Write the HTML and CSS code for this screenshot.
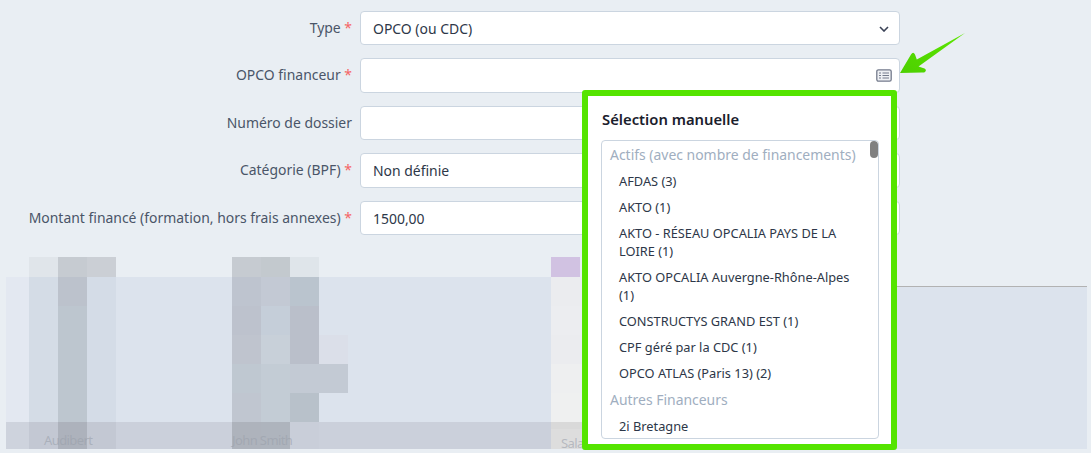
FILE: index.html
```html
<!DOCTYPE html>
<html lang="fr">
<head>
<meta charset="utf-8">
<title>Financement</title>
<link rel="stylesheet" href="styles.css">
</head>
<body>
<main class="page">
  <form class="form">
    <div class="row">
      <label class="label">Type <span class="req">*</span></label>
      <div class="field">OPCO (ou CDC)
        <svg class="chevron" width="10" height="6" viewBox="0 0 10 6"><path d="M1 1l4 4 4-4" fill="none" stroke="#3a4256" stroke-width="1.6"/></svg>
      </div>
    </div>
    <div class="row">
      <label class="label">OPCO financeur <span class="req">*</span></label>
      <div class="field">
        <svg class="listicon" width="16" height="13" viewBox="0 0 16 13"><rect x=".8" y=".8" width="14.4" height="11.4" rx="1.6" fill="#eef0f4" stroke="#747b8c" stroke-width="1.3"/><path d="M3 4h2M3 6.500h2M3 9h2M6.500 4h6.500M6.500 6.500h6.500M6.500 9h6.500" stroke="#747b8c" stroke-width="1.2"/></svg>
      </div>
    </div>
    <div class="row">
      <label class="label">Numéro de dossier</label>
      <div class="field"></div>
    </div>
    <div class="row">
      <label class="label">Catégorie (BPF) <span class="req">*</span></label>
      <div class="field">Non définie</div>
    </div>
    <div class="row">
      <label class="label">Montant financé (formation, hors frais annexes) <span class="req">*</span></label>
      <div class="field">1500,00</div>
    </div>
  </form>

  <section class="table"></section>

  <svg class="mosaic" width="582" height="192" viewBox="0 257 582 192" shape-rendering="crispEdges">
    <rect x="6" y="277" width="545" height="145" fill="#dce3ed"/>
    <rect x="6" y="422" width="545" height="27" fill="#cbd0db"/>
    <rect x="6" y="277" width="23" height="145" fill="#e3e8f1"/>
    <rect x="6" y="422" width="23" height="27" fill="#ced3dd"/>
    <rect x="29" y="257" width="29" height="20" fill="#e0e5ea"/>
    <rect x="29" y="277" width="29" height="145" fill="#d4dce6"/>
    <rect x="29" y="422" width="29" height="27" fill="#c3c8d3"/>
    <rect x="58" y="257" width="29" height="20" fill="#c6cbd1"/>
    <rect x="58" y="277" width="29" height="29" fill="#bcc2cc"/>
    <rect x="58" y="306" width="29" height="116" fill="#bdc6cf"/>
    <rect x="58" y="422" width="29" height="27" fill="#adb2bc"/>
    <rect x="87" y="257" width="29" height="20" fill="#cbcfd5"/>
    <rect x="87" y="277" width="29" height="145" fill="#d4dce7"/>
    <rect x="87" y="422" width="29" height="27" fill="#c3c8d3"/>
    <rect x="232" y="257" width="29" height="20" fill="#c6cbd1"/>
    <rect x="232" y="277" width="29" height="29" fill="#bec4cf"/>
    <rect x="232" y="306" width="29" height="29" fill="#bdc2cd"/>
    <rect x="232" y="335" width="29" height="29" fill="#bfc4ce"/>
    <rect x="232" y="364" width="29" height="29" fill="#bfc8d1"/>
    <rect x="232" y="393" width="29" height="29" fill="#c0c6d0"/>
    <rect x="232" y="422" width="29" height="27" fill="#aeb3bc"/>
    <rect x="261" y="257" width="29" height="20" fill="#c3c9ce"/>
    <rect x="261" y="277" width="29" height="29" fill="#c3c9d4"/>
    <rect x="261" y="306" width="29" height="29" fill="#c5ced9"/>
    <rect x="261" y="335" width="29" height="29" fill="#c8d0d9"/>
    <rect x="261" y="364" width="29" height="58" fill="#c3ccd5"/>
    <rect x="261" y="422" width="29" height="27" fill="#aeb4bd"/>
    <rect x="290" y="257" width="29" height="20" fill="#dfe5ea"/>
    <rect x="290" y="277" width="29" height="29" fill="#bac4ce"/>
    <rect x="290" y="306" width="29" height="58" fill="#babfca"/>
    <rect x="290" y="364" width="29" height="29" fill="#c3cad4"/>
    <rect x="290" y="393" width="29" height="29" fill="#b8c1ca"/>
    <rect x="290" y="422" width="29" height="27" fill="#c9ced9"/>
    <rect x="319" y="335" width="29" height="29" fill="#dbdfe9"/>
    <rect x="319" y="364" width="29" height="29" fill="#c3cad4"/>
    <rect x="551" y="257" width="29" height="20" fill="#d1c2e2"/>
    <rect x="551" y="277" width="31" height="29" fill="#ebecef"/>
    <rect x="551" y="306" width="31" height="29" fill="#ecedf0"/>
    <rect x="551" y="335" width="31" height="29" fill="#ebecef"/>
    <rect x="551" y="364" width="31" height="29" fill="#eeeff0"/>
    <rect x="551" y="393" width="31" height="29" fill="#eff0f0"/>
    <rect x="551" y="422" width="31" height="7" fill="#d9d9d9"/>
    <rect x="551" y="429" width="31" height="20" fill="#dddddd"/>
    <text class="ghost" x="44" y="445">Audibert</text>
    <text class="ghost" x="232" y="445">John Smith</text>
    <text class="ghost" x="561" y="448">Sala</text>
  </svg>

  <aside class="popup">
    <h2 class="popup-title">Sélection manuelle</h2>
    <div class="list">
      <div class="group">Actifs (avec nombre de financements)</div>
      <div class="item">AFDAS (3)</div>
      <div class="item">AKTO (1)</div>
      <div class="item">AKTO - RÉSEAU OPCALIA PAYS DE LA LOIRE (1)</div>
      <div class="item">AKTO OPCALIA Auvergne-Rhône-Alpes (1)</div>
      <div class="item">CONSTRUCTYS GRAND EST (1)</div>
      <div class="item">CPF géré par la CDC (1)</div>
      <div class="item">OPCO ATLAS (Paris 13) (2)</div>
      <div class="group">Autres Financeurs</div>
      <div class="item">2i Bretagne</div>
      <span class="thumb"></span>
    </div>
  </aside>

  <svg class="arrow" width="70" height="44" viewBox="898 31 70 44">
    <defs><linearGradient id="arrowfill" x1="1" y1="0" x2="0" y2="1"><stop offset="0" stop-color="#5ce600"/><stop offset="1" stop-color="#4dd000"/></linearGradient></defs>
    <path d="M900 73L911 54.500Q913.200 51 915 54.500L916.800 59.500L965 33L918.500 66.500L924.500 68.500Q927 70 925 72Q924.500 72.500 922 72.500Z" fill="url(#arrowfill)"/>
  </svg>
</main>
</body>
</html>
```

FILE: styles.css
```css
html, body {
  margin: 0;
  padding: 0;
  height: 100%;
}

body {
  background: #e9eef3;
  font-family: "Noto Sans", "Open Sans", sans-serif;
  font-size: 13.950px;
  color: #2d3748;
  overflow: hidden;
}

.page {
  position: relative;
  height: 453px;
  overflow: hidden;
}

.form {
  display: flex;
  flex-direction: column;
  gap: 13px;
  padding-top: 10.800px;
  height: 274.500px;
  box-sizing: border-box;
}

.row {
  display: grid;
  grid-template-columns: 360px 540px;
  height: 34.500px;
  align-items: center;
}

.label {
  text-align: right;
  padding-right: 8px;
  color: #4a5568;
  margin-top: -2px;
}

.req {
  color: #f56565;
}

.field {
  position: relative;
  box-sizing: border-box;
  height: 34.500px;
  line-height: 33px;
  padding-left: 12px;
  background: #fff;
  border: 1px solid #cbd5e0;
  border-radius: 4px;
}

.chevron {
  position: absolute;
  right: 10px;
  top: 14px;
}

.listicon {
  position: absolute;
  right: 7px;
  top: 10px;
}

.table {
  margin: 11.500px 4px 0 6px;
  height: 162px;
  background: #dce3ed;
  border-top: 1px solid #b2b2b2;
}

.mosaic {
  position: absolute;
  left: 0;
  top: 257px;
}

.ghost {
  font-size: 13px;
  letter-spacing: -0.6px;
  fill: #9aa0ab;
  fill-opacity: 0.6;
}

.popup {
  position: absolute;
  left: 582px;
  top: 90px;
  width: 315px;
  height: 360px;
  box-sizing: border-box;
  background: #fff;
  border: 6px solid #55e400;
  border-radius: 3px;
  padding: 14px 12px 0 13px;
}

.popup-title {
  margin: 0 0 11px 1px;
  font-size: 14.800px;
  line-height: 19px;
  font-weight: 600;
  color: #1a202c;
}

.list {
  position: relative;
  box-sizing: border-box;
  width: 278px;
  height: 299px;
  padding: 1px 0 0;
  border: 1px solid #cbd5e0;
  border-radius: 4px;
  overflow: hidden;
}

.group {
  height: 26px;
  line-height: 26px;
  padding-left: 8px;
  color: #a0aec0;
}

.item + .group {
  margin-top: 1px;
}

.item {
  padding: 4px 16px 4px 17px;
  line-height: 18px;
  font-size: 12.800px;
  color: #2d3748;
}

.thumb {
  position: absolute;
  top: 0;
  right: 0;
  width: 8px;
  height: 17px;
  border-radius: 4px;
  background: #808080;
}

.arrow {
  position: absolute;
  left: 898px;
  top: 31px;
}
```
